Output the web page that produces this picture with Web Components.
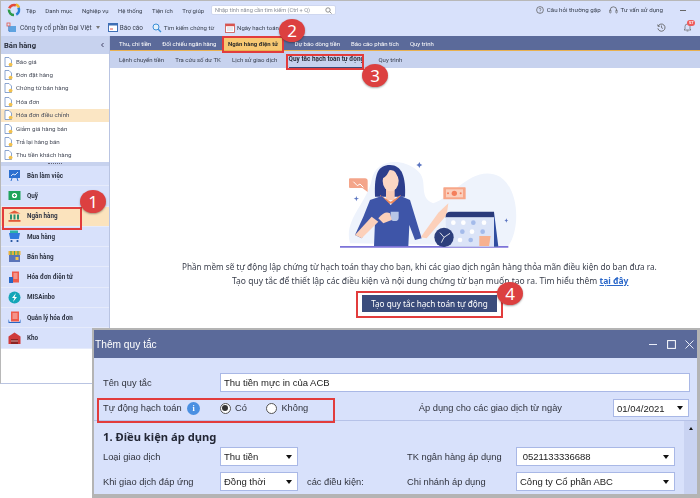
<!DOCTYPE html>
<html lang="vi"><head><meta charset="utf-8"><title>MISA</title>
<style>
html,body{margin:0;padding:0;background:#fff}
body{font-family:Roboto,"Liberation Sans",sans-serif;color:#2b2f3a}
</style></head><body>
<app-shell>
  <top-bar></top-bar>
  <div slot="side"><side-bar></side-bar></div>
  <main-panel slot="main"></main-panel>
  <rule-dialog slot="over"></rule-dialog>
  <red-box slot="over" style="left:2px;top:206px;width:80px;height:23px"></red-box>
  <red-box slot="over" style="left:222px;top:35px;width:62px;height:17px"></red-box>
  <red-box slot="over" style="left:286px;top:53px;width:78px;height:16px"></red-box>
  <red-box slot="over" style="left:356px;top:290px;width:147px;height:27px"></red-box>
  <red-box slot="over" style="left:97px;top:397px;width:238px;height:25px"></red-box>
  <step-badge slot="over" style="left:80px;top:189px">1</step-badge>
  <step-badge slot="over" style="left:279px;top:18px">2</step-badge>
  <step-badge slot="over" style="left:362px;top:63px">3</step-badge>
  <step-badge slot="over" style="left:497px;top:281px">4</step-badge>
</app-shell>
<script>
function def(name,css,html){
  customElements.define(name,class extends HTMLElement{
    constructor(){super();const r=this.attachShadow({mode:'open'});
      r.innerHTML='<style>'+css+'</style>'+(typeof html==='function'?html(this):html);}
  });
}
const UI='Roboto,"Liberation Sans",sans-serif';
const docIcon='<svg width="9" height="10" viewBox="0 0 9 10"><path d="M1 .5h4l2.5 2.5v6.5H1z" fill="#fff" stroke="#6f8fc4" stroke-width=".8"/><circle cx="6.6" cy="7.6" r="1.9" fill="#f2c14e"/></svg>';
const navIcons={
 work:'<rect x="2" y="2" width="11" height="8" fill="#2c6fd0"/><path d="M4 8l2-2 2 1 3-3" stroke="#fff" stroke-width=".8" fill="none"/><path d="M5 10l-1 3M10 10l1 3" stroke="#2c6fd0"/>',
 fund:'<rect x="1.5" y="3" width="12" height="9" fill="#1fa35c"/><circle cx="7.5" cy="7.5" r="2.6" fill="#fff"/><path d="M7.5 6v3M6 7.5h3" stroke="#1fa35c" stroke-width=".8"/>',
 bank:'<path d="M7.5 1.5l6 3h-12z" fill="#e25a3a"/><path d="M3 5.5h2v5H3zM6.5 5.5h2v5h-2zM10 5.5h2v5h-2z" fill="#2e8f6e"/><rect x="1.5" y="11" width="12" height="1.8" fill="#e25a3a"/>',
 buy:'<path d="M2 4h11l-1.2 6H3.2z" fill="#2f78dc"/><rect x="3" y="1.5" width="8" height="2.5" fill="#2ab0a8"/><circle cx="4.5" cy="12" r="1.1" fill="#1c4f9c"/><circle cx="10.5" cy="12" r="1.1" fill="#1c4f9c"/>',
 sell:'<rect x="2" y="5" width="11" height="8" fill="#5a74b8"/><rect x="1.5" y="2" width="12" height="4" fill="#e9b23c"/><path d="M4 2v4M7.5 2v4M11 2v4" stroke="#3aa575" stroke-width="1.1"/><rect x="8.5" y="8" width="3" height="3" fill="#f2c14e"/>',
 einv:'<rect x="5" y="1.5" width="7" height="11" fill="#ee5a4a"/><rect x="2" y="7" width="4" height="6" fill="#2766c4"/><path d="M6.5 4h4M6.5 6h4M6.5 8h4" stroke="#fff" stroke-width=".7"/>',
 inbo:'<circle cx="7.5" cy="7.5" r="6" fill="#14a6b8"/><path d="M9 3L5 8h2.4L6 12l4-5H7.6z" fill="#fff"/>',
 qinv:'<rect x="4" y="1.5" width="8" height="10" fill="#ee5a4a"/><path d="M5.5 4h5M5.5 6h5M5.5 8h5" stroke="#fff" stroke-width=".7"/><path d="M1.5 9v4h12V9l-1 3h-10z" fill="#2766c4"/>',
 store:'<path d="M7.5 1.5l6 4v7.5h-12V5.5z" fill="#cf3a3a"/><rect x="4" y="8" width="7" height="5" fill="#8d2424"/><path d="M4 10h7" stroke="#fff" stroke-width=".6"/>'
};
def('red-box',':host{position:absolute;display:block;box-sizing:border-box;border:2px solid #e23c3c;pointer-events:none}','');
def('step-badge',':host{position:absolute;display:flex;align-items:center;justify-content:center;width:26px;height:23px;border-radius:50%;background:#dc4040;color:#fff;font:400 17px "Noto Sans",sans-serif;box-shadow:0 1px 2px rgba(0,0,0,.35)}','<slot></slot>');

def('app-shell',`:host{display:grid;grid-template-columns:110px 1fr;grid-template-rows:35px 1fr;width:700px;height:498px;position:relative;overflow:hidden;background:#fff;border-top:1px solid #b8b8b8;box-sizing:border-box}
  .top{grid-column:1/3}`,
 '<div class="top"><slot></slot></div><slot name="side"></slot><slot name="main"></slot><slot name="over"></slot>');

def('menu-item',`:host{display:inline-block;font:400 6px ${UI};color:#39404f;white-space:nowrap}`,'<slot></slot>');
def('tool-item',`:host{display:inline-flex;align-items:center;gap:3px;font:400 6.4px ${UI};color:#39404f;white-space:nowrap}`,'<slot name="i"></slot><slot></slot>');

def('top-bar',`:host{display:block;height:35px;background:#d8e1fb;border-left:1px solid #b8b8b8;filter:blur(.25px)}
 .r1{display:flex;align-items:center;height:18px}
 .r2{display:flex;align-items:center;height:17px}
 .logo{margin:0 5px 0 6px;width:14px;height:14px;flex:none}
 .menus{display:flex;gap:9.5px;width:185px;flex:none}
 .search{width:125px;height:10px;background:#fff;border-radius:2px;border:1px solid #cfd7ef;box-sizing:border-box;display:flex;align-items:center;justify-content:space-between;padding:0 3px;font:400 5.6px ${UI};color:#8a8f9a;flex:none}
 .right{margin-left:auto;display:flex;align-items:center;gap:8px;margin-right:14px}
 .right menu-item{font-size:6.2px}
 .ri{display:flex;align-items:center;gap:3px}
 .min{width:6px;height:1px;background:#666;margin-left:9px}
 .tools{display:flex;align-items:center;margin-left:5px}
 .caret{width:0;height:0;border:2.5px solid transparent;border-top:3px solid #777;margin:2px 0 0 1px}
 .ricons{margin-left:auto;display:flex;gap:17px;margin-right:8px;align-items:center;position:relative}
 .cnt{position:absolute;right:-3px;top:-3px;background:#ee5a5a;color:#fff;font:700 4px ${UI};border-radius:3px;padding:0 1.5px;line-height:6px}
`,`<div class="r1">
 <svg class="logo" viewBox="0 0 14 14"><circle cx="7" cy="7" r="5" fill="none" stroke="#e34a3a" stroke-width="2.6" stroke-dasharray="8 24" transform="rotate(200 7 7)"/><circle cx="7" cy="7" r="5" fill="none" stroke="#2f9a4a" stroke-width="2.6" stroke-dasharray="8 24" transform="rotate(90 7 7)"/><circle cx="7" cy="7" r="5" fill="none" stroke="#2a7fd8" stroke-width="2.6" stroke-dasharray="8 24" transform="rotate(-30 7 7)"/><path d="M9 1.5a5 5 0 0 1 3 3" stroke="#f0b62e" stroke-width="2.6" fill="none"/></svg>
 <div class="menus"><menu-item>Tệp</menu-item><menu-item>Danh mục</menu-item><menu-item>Nghiệp vụ</menu-item><menu-item>Hệ thống</menu-item><menu-item>Tiện ích</menu-item><menu-item>Trợ giúp</menu-item></div>
 <div class="search"><span>Nhập tính năng cần tìm kiếm (Ctrl + Q)</span><svg width="7" height="7" viewBox="0 0 7 7"><circle cx="3" cy="3" r="2.2" fill="none" stroke="#777" stroke-width=".8"/><path d="M4.6 4.6l2 2" stroke="#777" stroke-width=".8"/></svg></div>
 <div class="right">
  <div class="ri"><svg width="8" height="8" viewBox="0 0 8 8"><circle cx="4" cy="4" r="3.4" fill="none" stroke="#555" stroke-width=".7"/><path d="M3 3.2a1 1 0 1 1 1.4 1L4 5" fill="none" stroke="#555" stroke-width=".6"/><circle cx="4" cy="6" r=".4" fill="#555"/></svg><menu-item>Câu hỏi thường gặp</menu-item></div>
  <div class="ri"><svg width="9" height="8" viewBox="0 0 9 8"><path d="M1.2 5V4a3.2 3.2 0 0 1 6.4 0v1" fill="none" stroke="#555" stroke-width=".7"/><rect x=".6" y="4" width="1.4" height="3" rx=".6" fill="none" stroke="#555" stroke-width=".6"/><rect x="6.8" y="4" width="1.4" height="3" rx=".6" fill="none" stroke="#555" stroke-width=".6"/></svg><menu-item>Tư vấn sử dụng</menu-item></div>
  <div class="min"></div>
 </div></div>
 <div class="r2"><div class="tools">
  <tool-item style="font-size:6.6px"><svg slot="i" width="11" height="11" viewBox="0 0 11 11"><rect x="3" y="4" width="7" height="6" fill="#5fa3e0"/><rect x="1" y="1" width="3" height="3" fill="none" stroke="#e2574c" stroke-width=".8"/><path d="M2.5 4v5H4" stroke="#4a7fc0" stroke-width=".7" fill="none"/></svg>Công ty cổ phần Đại Việt<span class="caret"></span></tool-item>
  <tool-item style="margin-left:8px;gap:2px"><svg slot="i" width="10" height="9" viewBox="0 0 10 9"><rect x=".5" y=".5" width="9" height="8" fill="#fff" stroke="#3f6fb5"/><rect x=".5" y=".5" width="9" height="2" fill="#3f6fb5"/><path d="M2 6h3" stroke="#e2574c"/></svg>Báo cáo</tool-item>
  <tool-item style="margin-left:9px;font-size:6px;gap:2px"><svg slot="i" width="10" height="10" viewBox="0 0 10 10"><circle cx="4" cy="4" r="3" fill="#e4f1fb" stroke="#3b8ed6" stroke-width="1"/><path d="M6.2 6.2L9 9" stroke="#3b8ed6" stroke-width="1.3"/></svg>Tìm kiếm chứng từ</tool-item>
  <tool-item style="margin-left:11px;font-size:6px;gap:2px"><svg slot="i" width="10" height="10" viewBox="0 0 10 10"><rect x=".5" y="1" width="9" height="8.5" fill="#fff" stroke="#c9504a" stroke-width=".8"/><rect x=".5" y="1" width="9" height="2.2" fill="#d9534f"/><path d="M2 5h6M2 7h6" stroke="#bcc4d4" stroke-width=".7"/></svg>Ngày hạch toán</tool-item>
 </div>
 <div class="ricons">
  <svg width="9" height="9" viewBox="0 0 9 9"><path d="M1.2 3a3.6 3.6 0 1 1-.3 2.4" fill="none" stroke="#555" stroke-width=".8"/><path d="M4.5 2.5v2.2l1.5.8M.6 1.5l.5 2 2-.4" fill="none" stroke="#555" stroke-width=".7"/></svg>
  <span style="position:relative;display:flex"><svg width="9" height="9" viewBox="0 0 9 9"><path d="M4.5 1a2.5 2.5 0 0 1 2.5 2.5V6l1 1H1l1-1V3.5A2.5 2.5 0 0 1 4.5 1zM3.6 8h1.8" fill="none" stroke="#666" stroke-width=".7"/></svg><span class="cnt">57</span></span>
 </div></div>`);

def('list-row',`:host{display:flex;align-items:center;gap:3px;height:13.4px;padding-left:3px;font:400 6.2px ${UI};color:#4a4f5c;white-space:nowrap}
 :host([active]){background:#fbe6c4}`,docIcon+'<slot></slot>');
def('nav-item',`:host{display:flex;align-items:center;height:20.3px;box-sizing:border-box;padding-left:6px;gap:5px;background:#d8e1fb;border-bottom:1px solid #e6ebfb;font:700 6.3px ${UI};color:#2e3443;white-space:nowrap}
 :host([active]){background:#fbe3bd}
 svg{width:15px;height:15px;flex:none}`,h=>'<svg viewBox="0 0 15 15">'+navIcons[h.getAttribute('icon')]+'</svg><slot></slot>');

def('side-bar',`:host{display:flex;flex-direction:column;width:110px;height:348px;box-sizing:border-box;border-left:1px solid #b8b8b8;border-right:1px solid #b9c4e2;border-bottom:1px solid #b9c4e2;background:#fff;filter:blur(.2px)}
 .h{height:18px;background:#c7d2ee;display:flex;align-items:center;justify-content:space-between;padding:0 4px 0 3px;font:700 7.6px ${UI};color:#2a2f3c;flex:none}
 .list{height:108px;padding-top:1px;box-sizing:border-box;flex:none}
 .split{height:4px;background:#c7d2ee;display:flex;justify-content:center;align-items:center;flex:none}
 .split i{width:14px;height:1px;border-top:1px dotted #667}
 `,`<div class="h"><span>Bán hàng</span><svg width="5" height="6" viewBox="0 0 5 6"><path d="M3.5 1L1.5 3l2 2" fill="none" stroke="#446" stroke-width="1"/></svg></div>
 <div class="list"><list-row>Báo giá</list-row><list-row>Đơn đặt hàng</list-row><list-row>Chứng từ bán hàng</list-row><list-row>Hóa đơn</list-row><list-row active>Hóa đơn điều chỉnh</list-row><list-row>Giảm giá hàng bán</list-row><list-row>Trả lại hàng bán</list-row><list-row>Thu tiền khách hàng</list-row></div>
 <div class="split"><i></i></div>
 <nav-item icon="work">Bàn làm việc</nav-item><nav-item icon="fund">Quỹ</nav-item><nav-item icon="bank" active>Ngân hàng</nav-item><nav-item icon="buy">Mua hàng</nav-item><nav-item icon="sell">Bán hàng</nav-item><nav-item icon="einv">Hóa đơn điện tử</nav-item><nav-item icon="inbo">MISAinbo</nav-item><nav-item icon="qinv">Quản lý hóa đơn</nav-item><nav-item icon="store">Kho</nav-item>`);

def('main-panel',`:host{display:flex;flex-direction:column;min-width:0;background:#fff}
 .tabs{height:15px;background:#5b6a9a;border-bottom:1px solid #e9b04e;display:flex;align-items:center;padding-left:9px;gap:11px;font:400 6px ${UI};color:#fff;white-space:nowrap;box-sizing:border-box;flex:none;filter:blur(.2px)}
 .tabs b{background:#f7c873;color:#2a2a2a;font-weight:700;height:100%;display:flex;align-items:center;justify-content:center;width:59px;margin:0 1px 0 -4px;flex:none}
 .subs{height:17px;background:#c7d2ee;display:flex;align-items:center;padding-left:9px;gap:11.3px;font:400 6px ${UI};color:#3a4050;white-space:nowrap;flex:none;filter:blur(.2px)}
 .subs b{font-weight:700;font-size:6.4px;color:#2a2f3c;align-self:stretch;display:flex;align-items:center;border-bottom:1.5px solid #3b4a78;box-sizing:border-box;margin-right:3px}
 .body{display:flex;flex-direction:column;align-items:flex-start;padding-top:92px;filter:blur(.2px)}
 svg{display:block;margin-left:190px}
 p{margin:0;font:400 8.2px/13.5px "Noto Sans",sans-serif;color:#3a3f4c;white-space:nowrap}
 a{color:#2a67c9;text-decoration:underline;font-weight:700}
 .btn{margin:8px 0 0 252px;width:135px;height:17px;background:#3b4c7c;color:#fff;font:400 8.2px "Noto Sans",sans-serif;display:flex;align-items:center;justify-content:center;flex:none}
`,`<div class="tabs"><span>Thu, chi tiền</span><span>Đối chiếu ngân hàng</span><b>Ngân hàng điện tử</b><span>Dự báo dòng tiền</span><span>Báo cáo phân tích</span><span>Quy trình</span></div>
 <div class="subs"><span>Lệnh chuyển tiền</span><span>Tra cứu số dư TK</span><span>Lịch sử giao dịch</span><b>Quy tắc hạch toán tự động</b><span>Quy trình</span></div>
 <div class="body">
 <svg width="240" height="110" viewBox="0 0 720 330">
  <path d="M150 250C130 180 200 130 215 60C225 0 300-10 350 30C390 60 350 110 400 130C460 110 520 10 600 50C660 90 660 210 625 258z" fill="#eef3fc"/>
  <path d="M120 258h505v5H120z" fill="#7d73d8"/>
  <path d="M150 55h45q8 0 8 8v33l-16-12h-37q-3 0-3-3V58q0-3 3-3z" fill="#f4a58a"/><path d="M160 65l12 12 8-5 10 10" fill="none" stroke="#fff" stroke-width="3"/>
  <rect x="430" y="82" width="67" height="36" rx="2" fill="#f7a688"/><rect x="438" y="88" width="51" height="24" fill="#fbd0be"/><circle cx="463" cy="100" r="8" fill="#f47f5c"/><circle cx="444" cy="100" r="3" fill="#f47f5c"/><circle cx="482" cy="100" r="3" fill="#f47f5c"/>
  <path d="M358 6l3 6 6 3-6 3-3 6-3-6-6-3 6-3z" fill="#5a74c0"/><path d="M169 108l2 6 6 2-6 2-2 6-2-6-6-2 6-2z" fill="#5a74c0"/><path d="M619 175l2 5 4 1-4 2-2 5-2-5-4-2 4-1z" fill="#5a74c0"/>
  <path d="M225 110C222 40 235 15 270 15C305 15 318 50 315 110H275z" fill="#2d3e8c"/>
  <rect x="258" y="80" width="26" height="40" fill="#f9c9b4"/><ellipse cx="272" cy="62" rx="24" ry="32" fill="#fcd7c4"/>
  <path d="M248 55Q262 50 270 25L235 40zM282 25Q290 48 300 60L305 35z" fill="#2d3e8c"/>
  <path d="M240 105L272 125L302 105L300 142L272 130L245 145z" fill="#f08a5d"/>
  <path d="M210 120L245 108L272 135L302 108L330 120L365 235L345 240L328 195L325 258H222L225 185L205 205L185 235L165 225L190 170z" fill="#3e55a8"/>
  <path d="M165 225L215 170L235 185L185 235z" fill="#fcd0ba"/>
  <path d="M362 232L415 158L445 130L440 165L380 235z" fill="#fcd0ba"/>
  <path d="M272 155h24v18q0 10-12 10t-12-10z" fill="#b8c6e6"/><path d="M235 175q20-25 35-15l5 20-25 10z" fill="#fcd0ba"/>
  <path d="M437 170q0-15 15-15h130v18H437z" fill="#2a3a7a"/><path d="M437 172h145l13 88H437z" fill="#dbe4f7"/><path d="M582 155l13 105h-13z" fill="#2f4da0"/>
  <g fill="#fff"><circle cx="460" cy="188" r="7"/><circle cx="490" cy="188" r="7"/><circle cx="552" cy="188" r="7"/><circle cx="516" cy="215" r="7"/><circle cx="480" cy="240" r="7"/></g>
  <g fill="#a4bbea"><circle cx="520" cy="188" r="7"/><circle cx="487" cy="215" r="7"/><circle cx="548" cy="215" r="7"/><circle cx="512" cy="240" r="7"/></g>
  <path d="M538 228h34l-5 30h-29z" fill="#f7b18f"/>
  <circle cx="432" cy="232" r="29" fill="#2d3f7c"/><path d="M432 232l-12-14M432 232l18-12M432 232l-8 16" stroke="#fff" stroke-width="2.5"/>
 </svg>
 <p style="margin:-10px 0 0 72px">Phần mềm sẽ tự động lập chứng từ hạch toán thay cho bạn, khi các giao dịch ngân hàng thỏa mãn điều kiện do bạn đưa ra.</p>
 <p style="margin-left:122px;font-size:8.5px">Tạo quy tắc để thiết lập các điều kiện và nội dung chứng từ bạn muốn tạo ra. Tìm hiểu thêm <a>tại đây</a></p>
 <div class="btn">Tạo quy tắc hạch toán tự động</div>
 </div>`);

def('form-field',`:host{display:flex;align-items:center;box-sizing:border-box;background:#fff;border:1px solid #a9b8e6;padding:0 5px 0 3px;font:400 9.5px "Liberation Sans",sans-serif;color:#222;white-space:nowrap}
 .t{flex:1}.c{width:0;height:0;border:3.2px solid transparent;border-top:4px solid #111;border-bottom:0}`,
 h=>'<span class="t"><slot></slot></span>'+(h.hasAttribute('dd')?'<span class="c"></span>':''));

def('rule-dialog',`:host{position:absolute;left:92px;top:327px;width:608px;height:170px;box-sizing:border-box;border:2px solid #b4b4b4;border-right-width:3px;border-bottom-width:4px;background:#d8e1fb;display:flex;flex-direction:column;font:400 9.3px "Liberation Sans",sans-serif;color:#30333d;filter:blur(.2px)}
 .title{height:28px;background:#5b6a9a;color:#fff;display:flex;align-items:center;padding:0 3px 0 1px;font:400 10.2px "Liberation Sans",sans-serif;flex:none;justify-content:space-between}
 .ctl{display:flex;gap:9.5px;align-items:center}
 .row1{display:flex;align-items:center;height:19px;margin:15px 7px 0 9px;flex:none}
 .row1 span{width:117px}
 .row2{display:flex;align-items:center;height:24px;margin:4px 8px 0 9px;flex:none}
 .info{width:13px;height:13px;border-radius:50%;background:#4a90e2;color:#fff;font:700 8px "Liberation Serif",serif;display:flex;align-items:center;justify-content:center;margin-left:5px}
 .radio{width:9px;height:9px;border-radius:50%;border:1px solid #555;background:#fff;display:inline-block;position:relative;margin-right:4.5px}
 .radio.on::after{content:"";position:absolute;inset:1.5px;border-radius:50%;background:#333}
 .opt{display:inline-flex;align-items:center}
 .scroll{flex:1;border-top:1px solid #b6c2e8;display:flex;min-height:0;overflow:hidden}
 .sc{flex:1;padding:8px 0 0 9px}
 .bar{width:13px;background:#c9d3f2;display:flex;justify-content:center;padding-top:6px;box-sizing:border-box;flex:none}
 .bar i{width:0;height:0;border:2.5px solid transparent;border-bottom:3px solid #111;border-top:0}
 h3{margin:0;font:700 11.2px "Noto Sans",sans-serif;color:#232735;line-height:15px}
 .g{display:grid;grid-template-columns:117px 78px 9px 100px 109px 159px;grid-template-rows:19px 19px;row-gap:6px;align-items:center;margin-top:3px}
`,`<div class="title"><span>Thêm quy tắc</span><span class="ctl"><svg width="8" height="8" viewBox="0 0 8 8"><path d="M0 4.5h8" stroke="#e8ecf8"/></svg><svg width="9" height="9" viewBox="0 0 9 9"><rect x=".6" y=".6" width="7.8" height="7.8" fill="none" stroke="#fff"/></svg><svg width="9" height="9" viewBox="0 0 9 9"><path d="M.5.5l8 8M8.5.5l-8 8" stroke="#e8ecf8"/></svg></span></div>
 <div class="row1"><span>Tên quy tắc</span><form-field style="width:470px;height:19px">Thu tiền mực in của ACB</form-field></div>
 <div class="row2"><span style="width:79px">Tự động hạch toán</span><i class="info" style="font-style:normal">i</i>
  <span class="opt" style="margin-left:19.5px"><span class="radio on"></span>Có</span><span class="opt" style="margin-left:19px"><span class="radio"></span>Không</span>
  <span style="margin-left:auto;margin-right:51px">Áp dụng cho các giao dịch từ ngày</span><form-field dd style="width:76px;height:18px">01/04/2021</form-field></div>
 <div class="scroll"><div class="sc"><h3>1. Điều kiện áp dụng</h3>
  <div class="g"><span>Loại giao dịch</span><form-field dd style="height:19px">Thu tiền</form-field><span></span><span></span><span>TK ngân hàng áp dụng</span><form-field dd style="height:19px">&nbsp;0521133336688</form-field>
  <span>Khi giao dịch đáp ứng</span><form-field dd style="height:19px">Đồng thời</form-field><span></span><span>các điều kiện:</span><span>Chi nhánh áp dụng</span><form-field dd style="height:19px">Công ty Cổ phần ABC</form-field></div>
 </div><div class="bar"><i></i></div></div>`);
</script>
</body></html>
